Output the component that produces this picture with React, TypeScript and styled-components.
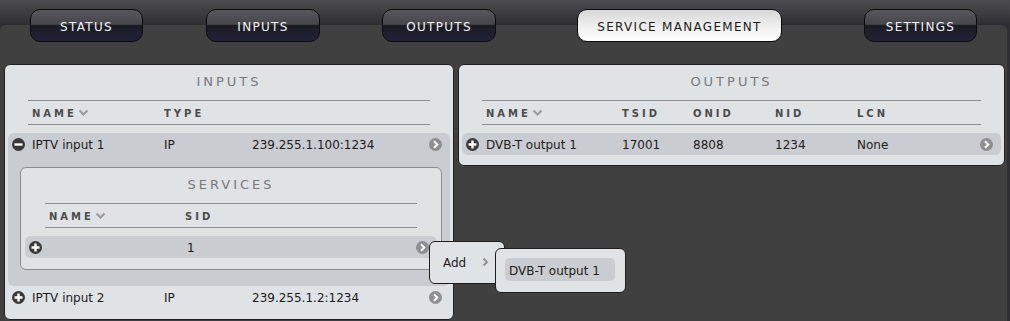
import { FunctionComponent } from "react";
import styled, { createGlobalStyle } from "styled-components";

const GlobalStyle = createGlobalStyle`
    html, body {
        margin: 0;
        padding: 0;
        background: #2f2f33;
    }
    body {
        font-family: "DejaVu Sans", "Liberation Sans", sans-serif;
        font-size: 12px;
        color: #1c1c1c;
    }
`;

const Page = styled.div`
    position: relative;
    width: 1010px;
    height: 321px;
    overflow: hidden;
    background: #2f2f33;
`;

const TopBar = styled.div`
    height: 25px;
    display: flex;
    align-items: flex-start;
    background: linear-gradient(to bottom, #4c4c51 0%, #3a3a3f 60%, #2e2e32 100%);
`;

const Tab = styled.div<{ $offset: number; $width: number; $active?: boolean }>`
    position: relative;
    z-index: 1;
    margin-top: 9px;
    margin-left: ${(p) => p.$offset}px;
    width: ${(p) => p.$width}px;
    height: 33px;
    box-sizing: border-box;
    padding-top: 2px;
    border: 1px solid #0b0b0d;
    border-radius: 10px;
    display: flex;
    align-items: center;
    justify-content: center;
    font-size: 12px;
    letter-spacing: 1.3px;
    color: ${(p) => (p.$active ? "#1b1b1b" : "#f4f4f4")};
    background: ${(p) =>
        p.$active
            ? "linear-gradient(to bottom, #d6d6d6 0%, #ececec 45%, #ffffff 100%)"
            : "linear-gradient(to bottom, #57575d 0%, #46464c 46%, #1b1b24 50%, #22223a 100%)"};
`;

const Main = styled.div`
    height: 296px;
    width: 1007px;
    box-sizing: border-box;
    background: #404040;
    border-radius: 6px 6px 0 0;
    padding: 39px 0 0 4px;
    display: flex;
    align-items: flex-start;
    gap: 4px;
`;

const Panel = styled.div<{ $width: number }>`
    width: ${(p) => p.$width}px;
    box-sizing: border-box;
    background: #e0e3e6;
    border: 1px solid #202020;
    border-radius: 6px;
    padding: 3px 3px 10px;
`;

const InputsPanel = styled(Panel)`
    height: 256px;
`;

const SubPanel = styled.div`
    background: #e0e3e6;
    border: 1px solid #8c8f92;
    border-radius: 6px;
    margin: 12px 8px 0 12px;
    padding: 3px 4px 10px;
    height: 103px;
    box-sizing: border-box;
`;

const Title = styled.div`
    text-align: center;
    font-size: 13px;
    letter-spacing: 3px;
    color: #77797b;
    line-height: 18px;
    padding: 5px 0 9px;
`;

const HeaderRow = styled.div<{ $inset: number }>`
    display: flex;
    align-items: center;
    height: 22px;
    margin: 0 ${(p) => p.$inset}px 8px;
    padding: 1px 0 0 4px;
    box-sizing: content-box;
    border-top: 1px solid #8b8e91;
    border-bottom: 1px solid #8b8e91;
`;

const HeadCell = styled.div<{ $width?: number }>`
    ${(p) => (p.$width ? `width: ${p.$width}px;` : "flex: 1;")}
    display: flex;
    align-items: center;
    font-size: 10px;
    font-weight: bold;
    letter-spacing: 3px;
    color: #4a4b4d;
`;

const ExpandedBlock = styled.div`
    background: #c9ccd0;
    border-radius: 6px;
    padding-bottom: 16px;
`;

const Row = styled.div<{ $highlight?: boolean }>`
    display: flex;
    align-items: center;
    height: 22px;
    padding: 0 8px 0 4px;
    border-radius: 6px;
    background: ${(p) => (p.$highlight ? "#c9ccd0" : "transparent")};
`;

const Cell = styled.div<{ $width?: number }>`
    ${(p) => (p.$width ? `width: ${p.$width}px;` : "flex: 1;")}
    white-space: nowrap;
    font-size: 12px;
    line-height: 14px;
    padding-top: 2px;
    color: #1c1c1c;
`;

const IconSlot = styled.div`
    width: 13px;
    height: 13px;
    margin-right: 7px;
    display: flex;
`;

const Popup = styled.div<{ $x: number; $y: number; $w: number; $h: number }>`
    position: absolute;
    left: ${(p) => p.$x}px;
    top: ${(p) => p.$y}px;
    width: ${(p) => p.$w}px;
    height: ${(p) => p.$h}px;
    box-sizing: border-box;
    background: #e0e3e6;
    border: 1px solid #1e1e1e;
    border-radius: 6px;
    display: flex;
    align-items: center;
`;

const AddLabel = styled.div`
    font-size: 12px;
    margin-left: 13px;
    padding-top: 1px;
    color: #1c1c1c;
`;

const AddChevron = styled.div`
    margin-left: 16px;
    margin-top: -2px;
    display: flex;
`;

const MenuItem = styled.div`
    margin: 9px 0 0 9px;
    align-self: flex-start;
    width: 110px;
    height: 23px;
    box-sizing: border-box;
    padding: 2px 0 0 4px;
    border-radius: 5px;
    background: #c9ccd0;
    display: flex;
    align-items: center;
    font-size: 12px;
    color: #1c1c1c;
`;

const CircleIcon: FunctionComponent<{ kind: "plus" | "minus" | "arrow" }> = ({
    kind,
}) => (
    <svg width="13" height="13" viewBox="0 0 13 13">
        <circle cx="6.5" cy="6.5" r="6.5" fill={kind === "arrow" ? "#8d8f92" : "#3a3a3a"} />
        {kind === "minus" && <rect x="2.5" y="5.3" width="8" height="2.4" fill="#fff" />}
        {kind === "plus" && (
            <path d="M5.3 2.5h2.4v2.8h2.8v2.4H7.7v2.8H5.3V7.7H2.5V5.3h2.8z" fill="#fff" />
        )}
        {kind === "arrow" && (
            <path d="M5 3.2l3.3 3.3L5 9.8" fill="none" stroke="#fff" strokeWidth="2" />
        )}
    </svg>
);

const SortChevron = () => (
    <svg width="11" height="8" viewBox="0 0 11 8" style={{ marginLeft: 1 }}>
        <path d="M1.5 1.5l4 4 4-4" fill="none" stroke="#9a9c9f" strokeWidth="2.2" />
    </svg>
);

const SmallChevron = () => (
    <svg width="7" height="10" viewBox="0 0 7 10">
        <path d="M1.5 1.5l3.5 3.5-3.5 3.5" fill="none" stroke="#8d8f92" strokeWidth="2" />
    </svg>
);

interface DataRowProps {
    icon: "plus" | "minus";
    cells: { text: string; width?: number }[];
    highlight?: boolean;
}

const DataRow: FunctionComponent<DataRowProps> = ({ icon, cells, highlight }) => (
    <Row $highlight={highlight}>
        <IconSlot>
            <CircleIcon kind={icon} />
        </IconSlot>
        {cells.map(({ text, width }, i) => (
            <Cell key={i} $width={width}>
                {text}
            </Cell>
        ))}
        <CircleIcon kind="arrow" />
    </Row>
);

const Header: FunctionComponent<{
    inset: number;
    columns: { label: string; width?: number; sort?: boolean }[];
}> = ({ inset, columns }) => (
    <HeaderRow $inset={inset}>
        {columns.map(({ label, width, sort }) => (
            <HeadCell key={label} $width={width}>
                {label}
                {sort && <SortChevron />}
            </HeadCell>
        ))}
    </HeaderRow>
);

const TABS = [
    { label: "STATUS", offset: 30, width: 113 },
    { label: "INPUTS", offset: 63, width: 114 },
    { label: "OUTPUTS", offset: 62, width: 114 },
    { label: "SERVICE MANAGEMENT", offset: 81, width: 205, active: true },
    { label: "SETTINGS", offset: 82, width: 113 },
];

export default function App() {
    return (
        <Page>
            <GlobalStyle />
            <TopBar>
                {TABS.map(({ label, offset, width, active }) => (
                    <Tab key={label} $offset={offset} $width={width} $active={active}>
                        {label}
                    </Tab>
                ))}
            </TopBar>
            <Main>
                <InputsPanel $width={450}>
                    <Title>INPUTS</Title>
                    <Header
                        inset={20}
                        columns={[
                            { label: "NAME", width: 132, sort: true },
                            { label: "TYPE" },
                        ]}
                    />
                    <ExpandedBlock>
                        <DataRow
                            icon="minus"
                            cells={[
                                { text: "IPTV input 1", width: 132 },
                                { text: "IP", width: 88 },
                                { text: "239.255.1.100:1234" },
                            ]}
                        />
                        <SubPanel>
                            <Title>SERVICES</Title>
                            <Header
                                inset={20}
                                columns={[
                                    { label: "NAME", width: 136, sort: true },
                                    { label: "SID" },
                                ]}
                            />
                            <DataRow
                                highlight
                                icon="plus"
                                cells={[
                                    { text: "", width: 138 },
                                    { text: "1" },
                                ]}
                            />
                        </SubPanel>
                    </ExpandedBlock>
                    <DataRow
                        icon="plus"
                        cells={[
                            { text: "IPTV input 2", width: 132 },
                            { text: "IP", width: 88 },
                            { text: "239.255.1.2:1234" },
                        ]}
                    />
                </InputsPanel>
                <Panel $width={547}>
                    <Title>OUTPUTS</Title>
                    <Header
                        inset={20}
                        columns={[
                            { label: "NAME", width: 136, sort: true },
                            { label: "TSID", width: 71 },
                            { label: "ONID", width: 82 },
                            { label: "NID", width: 82 },
                            { label: "LCN" },
                        ]}
                    />
                    <DataRow
                        highlight
                        icon="plus"
                        cells={[
                            { text: "DVB-T output 1", width: 136 },
                            { text: "17001", width: 71 },
                            { text: "8808", width: 82 },
                            { text: "1234", width: 82 },
                            { text: "None" },
                        ]}
                    />
                </Panel>
            </Main>
            <Popup $x={429} $y={241} $w={76} $h={43}>
                <AddLabel>Add</AddLabel>
                <AddChevron>
                    <SmallChevron />
                </AddChevron>
            </Popup>
            <Popup $x={495} $y={248} $w={131} $h={45}>
                <MenuItem>DVB-T output 1</MenuItem>
            </Popup>
        </Page>
    );
}
